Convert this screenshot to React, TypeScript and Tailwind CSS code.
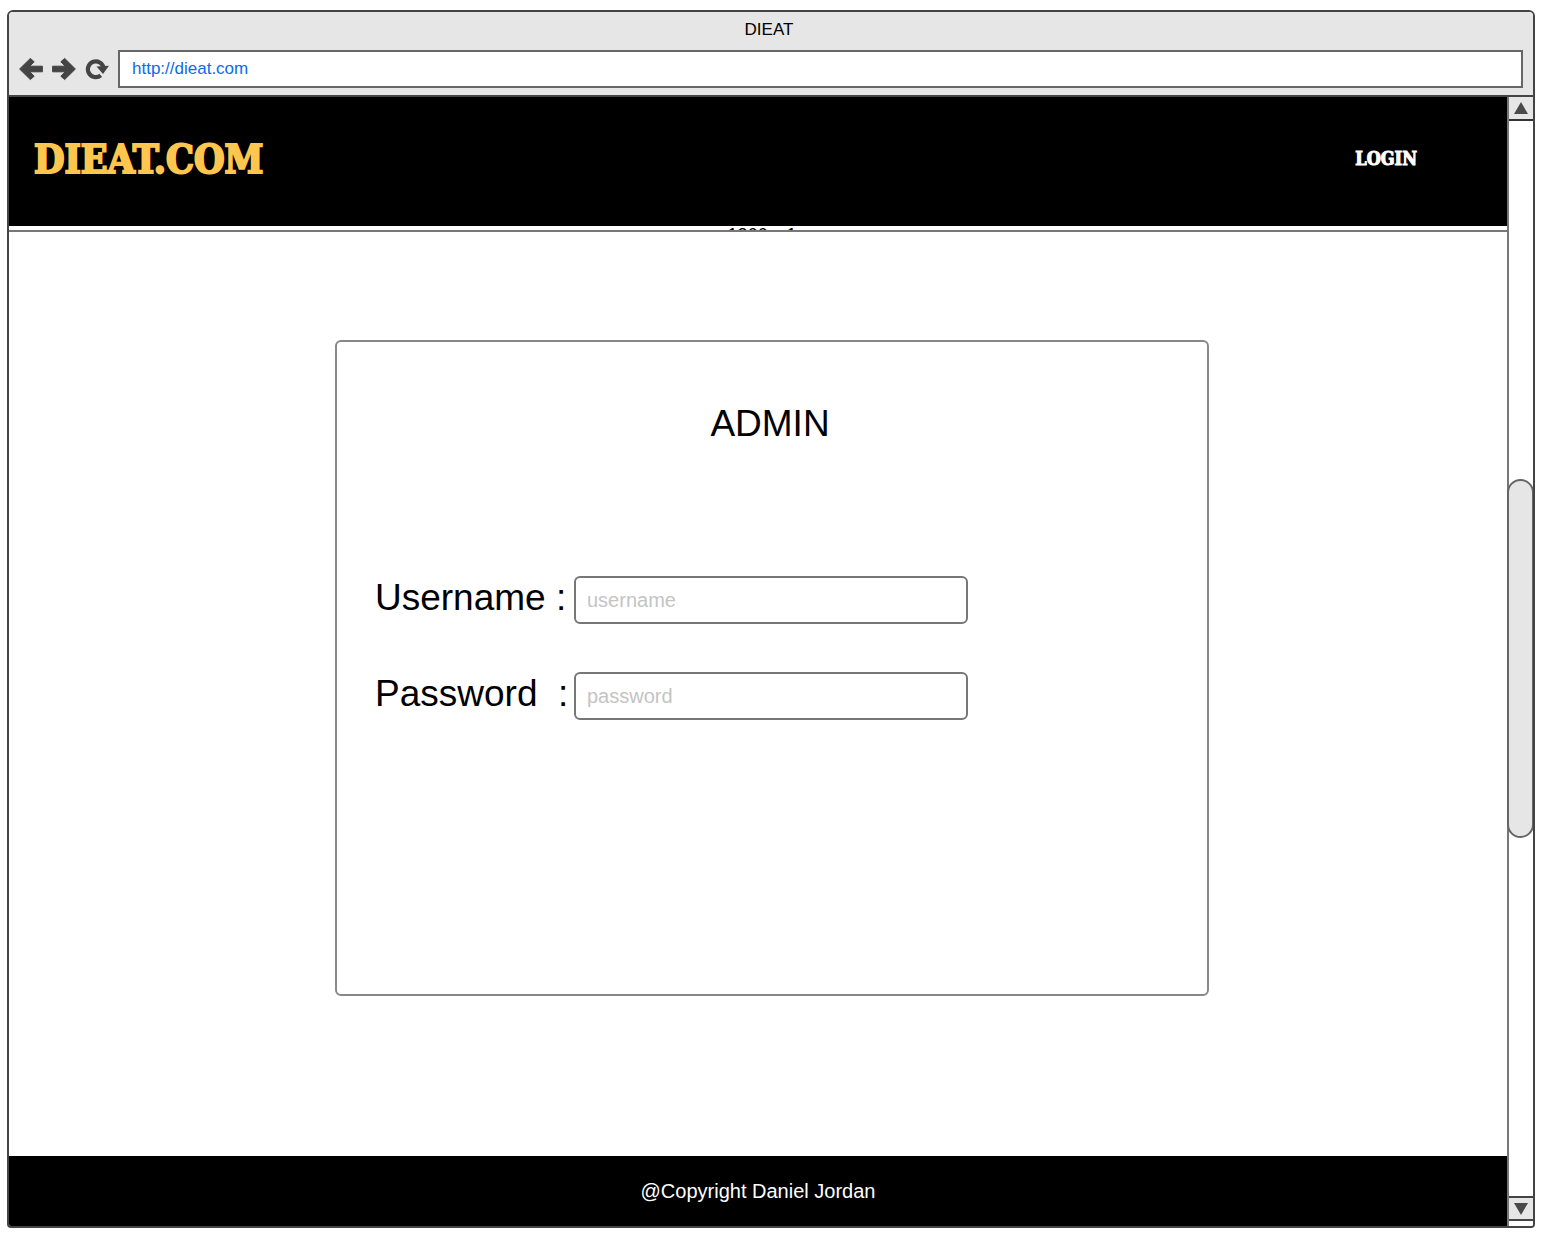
import { useState } from "react";

function BackIcon() {
  return (
    <svg viewBox="0 0 24 24" className="h-6 w-6" fill="#444" stroke="#444" strokeWidth="1" strokeLinejoin="round" aria-hidden="true">
      <path d="M.6 12 11.3 1.4l3.9 3.4-4.4 4.4H23.4v5.6H10.8l4.4 4.4-3.9 3.4z" />
    </svg>
  );
}

function ForwardIcon() {
  return (
    <svg viewBox="0 0 24 24" className="h-6 w-6" fill="#444" stroke="#444" strokeWidth="1" strokeLinejoin="round" aria-hidden="true">
      <path d="M23.4 12 12.7 1.4 8.8 4.8l4.4 4.4H.6v5.6h12.6l-4.4 4.4 3.9 3.4z" />
    </svg>
  );
}

function ReloadIcon() {
  return (
    <svg viewBox="0 0 24 24" className="h-6 w-6" aria-hidden="true">
      <path d="M15.8 18.4A7.9 7.9 0 1 1 18.6 11" fill="none" stroke="#444" strokeWidth="4.2" />
      <path d="M11.5 9.5 24 8.8 18 17z" fill="#444" />
    </svg>
  );
}

type FieldProps = {
  id: string;
  label: string;
  type: string;
  placeholder: string;
};

function Field({ id, label, type, placeholder }: FieldProps) {
  const [value, setValue] = useState("");
  return (
    <div className="flex items-center">
      <label htmlFor={id} className="w-[199px] shrink-0 pb-1 text-[37px] leading-10 whitespace-pre text-black">
        {label}
      </label>
      <input
        id={id}
        type={type}
        value={value}
        placeholder={placeholder}
        onChange={(e) => setValue(e.target.value)}
        className="h-12 w-[394px] min-w-0 rounded-md border-2 border-[#777] bg-white px-[11px] text-xl text-black outline-none placeholder:text-[#c4c4c4]"
      />
    </div>
  );
}

function Scrollbar() {
  return (
    <div className="flex w-[26px] shrink-0 flex-col border-l-2 border-[#777] bg-white">
      <button type="button" aria-label="Scroll up" className="flex h-6 items-center justify-center border-b-2 border-[#333] bg-[#e6e6e6]">
        <svg viewBox="0 0 14 12" className="h-3 w-3.5" aria-hidden="true">
          <path d="M7 0 14 12H0z" fill="#4a4a4a" />
        </svg>
      </button>
      <div className="flex flex-1 flex-col justify-center">
        <div className="-mr-px -ml-0.5 h-1/3 rounded-full border-2 border-[#666] bg-[#e6e6e6]" />
      </div>
      <button type="button" aria-label="Scroll down" className="mb-[5px] flex h-[25px] items-center justify-center border-y-2 border-[#444] bg-[#e6e6e6]">
        <svg viewBox="0 0 14 12" className="h-3 w-3.5" aria-hidden="true">
          <path d="M0 0h14L7 12z" fill="#4a4a4a" />
        </svg>
      </button>
    </div>
  );
}

export default function App() {
  return (
    <div className="min-h-screen bg-white px-[7px] py-2.5 font-['Liberation_Sans',Arial,sans-serif]">
      <div className="flex flex-col overflow-hidden rounded-t-md rounded-b-sm border-2 border-[#444]">
        <div className="border-b-2 border-[#444] bg-[#e6e6e6] pb-[7px]">
          <div className="pt-1.5 pr-1 text-center text-[17px] leading-6 text-black">DIEAT</div>
          <div className="mt-2 flex items-center px-2.5">
            <div className="flex w-[99px] shrink-0 gap-[9px]">
              <button type="button" aria-label="Back"><BackIcon /></button>
              <button type="button" aria-label="Forward"><ForwardIcon /></button>
              <button type="button" aria-label="Reload"><ReloadIcon /></button>
            </div>
            <input
              type="text"
              aria-label="Address"
              defaultValue="http://dieat.com"
              className="h-[38px] min-w-0 flex-1 border-2 border-[#666] bg-white px-3 text-[17px] text-[#0d6af0] outline-none"
            />
          </div>
        </div>

        <div className="flex flex-1">
          <div className="flex min-w-0 flex-1 flex-col">
            <header className="flex h-[129px] items-center justify-between bg-black pr-[90px] pb-1.5 pl-[25px] font-['DejaVu_Serif_Condensed','DejaVu_Serif',serif] font-bold">
              <a href="#home" className="text-[39px] leading-10 text-[#ffc64f] [-webkit-text-stroke:2px_#ffc64f]">DIEAT.COM</a>
              <a href="#login" className="text-lg leading-6 text-white [-webkit-text-stroke:1px_white]">LOGIN</a>
            </header>
            <div aria-hidden="true" className="h-1.5 overflow-hidden border-b-2 border-[#777] pl-2 text-center text-lg leading-[18px] text-black">
              1366 x 1
            </div>

            <main className="flex flex-1 justify-center pt-[108px] pb-40 pl-7">
              <form className="min-h-[656px] w-[874px] max-w-full rounded-md border-2 border-[#888] px-[38px]" onSubmit={(e) => e.preventDefault()}>
                <h1 className="mt-[62px] pr-1 text-center text-[37px] leading-10 text-black">ADMIN</h1>
                <div className="mt-[132px] flex flex-col gap-12">
                  <Field id="username" label="Username :" type="text" placeholder="username" />
                  <Field id="password" label="Password  :" type="password" placeholder="password" />
                </div>
              </form>
            </main>

            <footer className="flex h-[70px] items-center justify-center bg-black text-xl text-white">
              @Copyright Daniel Jordan
            </footer>
          </div>
          <Scrollbar />
        </div>
      </div>
    </div>
  );
}
